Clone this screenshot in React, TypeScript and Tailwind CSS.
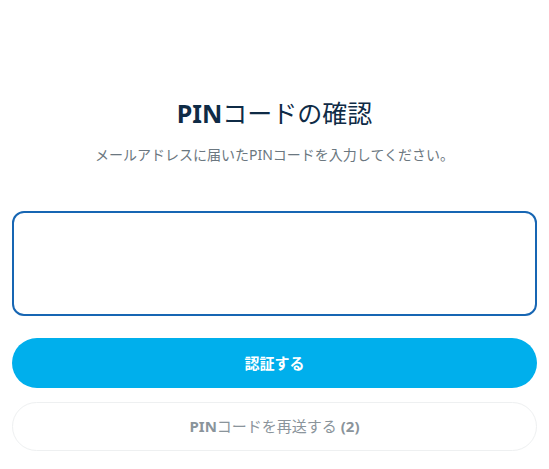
export default function App() {
  return (
    <div
      className="min-h-[469px] bg-white px-3 pt-[95px]"
      style={{ fontFamily: '"Noto Sans", "Noto Sans CJK JP", sans-serif' }}
    >
      <h1 className="text-center text-[25px] leading-[36px] text-[#0f2b46]">
        <span className="font-bold">PIN</span>コードの確認
      </h1>
      <p className="mt-[14px] text-center text-[14px] leading-5 text-[#6b7780]">
        メールアドレスに届いたPINコードを入力してください。
      </p>

      <div className="mt-[46px] h-[105px] rounded-xl border-2 border-[#1766b3] bg-white" />

      <button className="mt-[22px] flex h-[50px] w-full items-center justify-center rounded-full bg-[#00afec] text-[15px] font-bold text-white">
        認証する
      </button>

      <button className="mt-[14px] flex h-[49px] w-full items-center justify-center rounded-full border border-[#eef0f1] bg-white text-[15px] text-[#8a949b]">
        <span className="font-bold">PIN</span>コードを再送する&nbsp;<span className="font-bold">(2)</span>
      </button>
    </div>
  );
}
